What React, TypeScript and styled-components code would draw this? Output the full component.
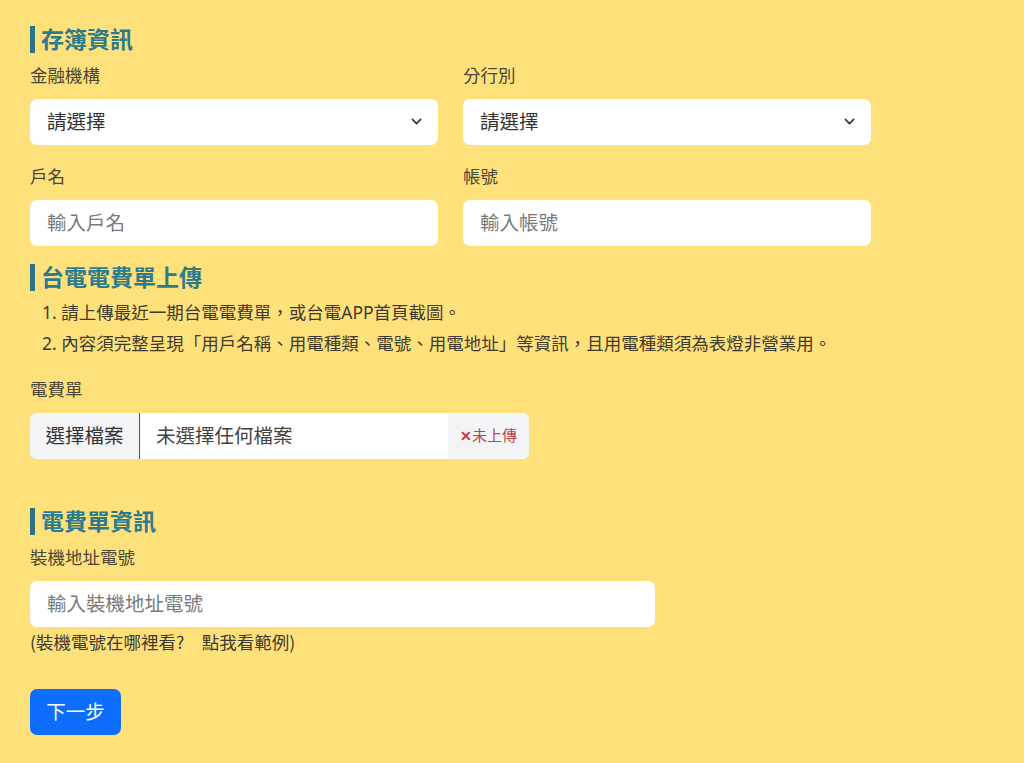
import * as React from "react";
import styled, { createGlobalStyle } from "styled-components";

const GlobalStyle = createGlobalStyle`
  html, body {
    margin: 0;
    padding: 0;
    background: #ffe17b;
  }
  body {
    font-family: "Noto Sans", "Noto Sans CJK TC", sans-serif;
    color: #444;
  }
  * {
    box-sizing: border-box;
  }
`;

const Page = styled.div`
  min-height: 763px;
  padding: 26px 30px 28px;
  display: flex;
  flex-direction: column;
`;

const SectionTitle = styled.div<{ $gapTop?: number }>`
  height: 27px;
  line-height: 24px;
  border-left: 5px solid #2a7486;
  padding-left: 6px;
  margin-top: ${(p) => p.$gapTop ?? 0}px;
  margin-bottom: 10px;
  font-family: "Noto Sans CJK TC", sans-serif;
  font-size: 23px;
  font-weight: 700;
  color: #2d7a8c;
`;

const Grid = styled.div`
  display: grid;
  grid-template-columns: 408px 408px;
  column-gap: 25px;
  row-gap: 19px;
`;

const Field = styled.div<{ $width?: number }>`
  display: flex;
  flex-direction: column;
  width: ${(p) => (p.$width ? `${p.$width}px` : "auto")};
`;

const Label = styled.div`
  font-family: "Noto Sans CJK TC", sans-serif;
  font-size: 17.5px;
  line-height: 24px;
  height: 24px;
  margin-bottom: 12px;
  color: #4b4636;
`;

const Box = styled.div`
  height: 46px;
  background: #fff;
  border-radius: 7px;
  display: flex;
  align-items: center;
  padding: 0 16px 4px 17px;
  font-family: "Noto Sans CJK TC", sans-serif;
  font-size: 19.5px;
`;

const SelectBox = styled(Box)`
  justify-content: space-between;
  color: #333;

  svg {
    margin-top: 3px;
  }
`;

const Placeholder = styled(Box)`
  color: #7a7a7a;
`;

const Chevron = () => (
  <svg width="11" height="11" viewBox="0 0 16 16" fill="none">
    <path d="M2 5l6 6 6-6" stroke="#343a40" strokeWidth="2.4" strokeLinecap="round" strokeLinejoin="round" />
  </svg>
);

const Notes = styled.div`
  padding-left: 12px;
  margin-top: -4px;
  margin-bottom: 18px;
  font-family: "Noto Sans", "Noto Sans CJK TC", sans-serif;
  font-size: 17.5px;
  line-height: 31px;
  color: #3f3a2c;
`;

const FileGroup = styled.div`
  width: 499px;
  height: 46px;
  display: flex;
  border-radius: 7px;
  overflow: hidden;
  background: #fff;
  font-family: "Noto Sans CJK TC", sans-serif;
`;

const FileButton = styled.div`
  width: 110px;
  padding-bottom: 4px;
  background: #f3f4f6;
  border-right: 1px solid #555;
  display: flex;
  align-items: center;
  justify-content: center;
  font-size: 19.5px;
  color: #333;
`;

const FileName = styled.div`
  flex: 1;
  display: flex;
  align-items: center;
  padding: 0 0 4px 16px;
  font-size: 19.5px;
  color: #444;
`;

const Status = styled.div`
  width: 81px;
  padding-bottom: 3px;
  background: #f3f4f6;
  display: flex;
  align-items: center;
  justify-content: center;
  font-size: 15px;
  color: #c0424c;
`;

const Cross = styled.span`
  font-weight: 700;
  font-size: 14px;
  color: #d0343a;
`;

const Help = styled.div`
  margin-top: 3px;
  font-family: "Noto Sans CJK TC", sans-serif;
  font-size: 17.5px;
  line-height: 24px;
  color: #3d3a30;
`;

const NextButton = styled.button`
  margin-top: 35px;
  align-self: flex-start;
  width: 91px;
  height: 46px;
  padding: 0 0 4px;
  border: none;
  border-radius: 7px;
  background: #0d6efd;
  color: #fff;
  font-family: "Noto Sans CJK TC", sans-serif;
  font-size: 19.5px;
  cursor: pointer;
`;

const App = () => {
  return (
    <>
      <GlobalStyle />
      <Page>
        <SectionTitle>存簿資訊</SectionTitle>
        <Grid>
          <Field>
            <Label>金融機構</Label>
            <SelectBox>
              請選擇
              <Chevron />
            </SelectBox>
          </Field>
          <Field>
            <Label>分行別</Label>
            <SelectBox>
              請選擇
              <Chevron />
            </SelectBox>
          </Field>
          <Field>
            <Label>戶名</Label>
            <Placeholder>輸入戶名</Placeholder>
          </Field>
          <Field>
            <Label>帳號</Label>
            <Placeholder>輸入帳號</Placeholder>
          </Field>
        </Grid>

        <SectionTitle $gapTop={18}>台電電費單上傳</SectionTitle>
        <Notes>
          <div>1. 請上傳最近一期台電電費單，或台電APP首頁截圖。</div>
          <div>2. 內容須完整呈現「用戶名稱、用電種類、電號、用電地址」等資訊，且用電種類須為表燈非營業用。</div>
        </Notes>
        <Field>
          <Label>電費單</Label>
          <FileGroup>
            <FileButton>選擇檔案</FileButton>
            <FileName>未選擇任何檔案</FileName>
            <Status>
              <Cross>✕</Cross>未上傳
            </Status>
          </FileGroup>
        </Field>

        <SectionTitle $gapTop={49}>電費單資訊</SectionTitle>
        <Field $width={625}>
          <Label>裝機地址電號</Label>
          <Placeholder>輸入裝機地址電號</Placeholder>
        </Field>
        <Help>(裝機電號在哪裡看?　點我看範例)</Help>
        <NextButton>下一步</NextButton>
      </Page>
    </>
  );
};

export default App;
